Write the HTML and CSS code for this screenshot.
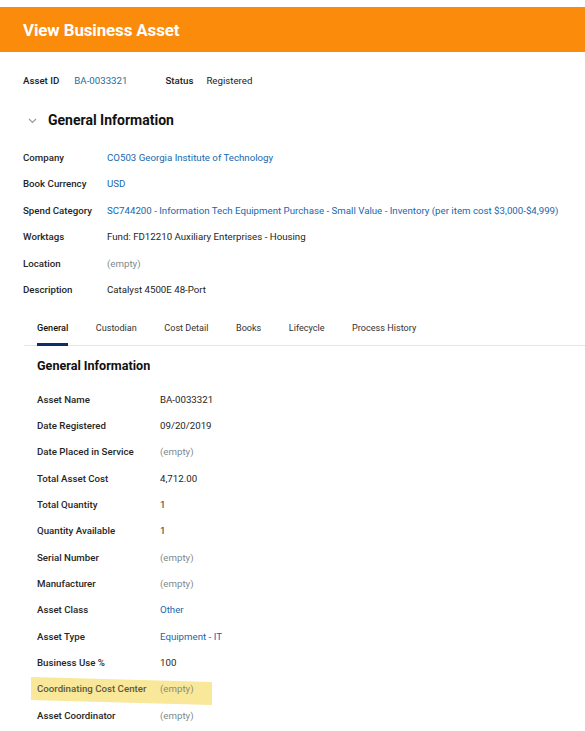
FILE: index.html
```html
<!DOCTYPE html>
<html>
<head>
<meta charset="utf-8">
<link rel="stylesheet" href="styles.css">
</head>
<body>
<div class="topbar"><h1 class="title">View Business Asset</h1></div>
<div class="meta">
  <span class="meta-label">Asset ID</span>
  <span class="meta-id link">BA-0033321</span>
  <span class="meta-label status-label">Status</span>
  <span class="meta-val">Registered</span>
</div>
<div class="section-head">
  <svg class="chev" width="9" height="6" viewBox="0 0 9 6"><path d="M1 1 L4.5 4.5 L8 1" fill="none" stroke="#8a9aa6" stroke-width="1.1"/></svg>
  <h2 class="section-title">General Information</h2>
</div>
<div class="fields top-fields">
  <div class="row"><span class="label">Company</span><span class="value link">CO503 Georgia Institute of Technology</span></div>
  <div class="row"><span class="label">Book Currency</span><span class="value link">USD</span></div>
  <div class="row"><span class="label">Spend Category</span><span class="value link">SC744200 - Information Tech Equipment Purchase - Small Value - Inventory (per item cost $3,000-$4,999)</span></div>
  <div class="row"><span class="label">Worktags</span><span class="value">Fund: FD12210 Auxiliary Enterprises - Housing</span></div>
  <div class="row"><span class="label">Location</span><span class="value empty">(empty)</span></div>
  <div class="row"><span class="label">Description</span><span class="value">Catalyst 4500E 48-Port</span></div>
</div>
<div class="tabs">
  <span class="tab active">General</span>
  <span class="tab">Custodian</span>
  <span class="tab">Cost Detail</span>
  <span class="tab">Books</span>
  <span class="tab">Lifecycle</span>
  <span class="tab">Process History</span>
</div>
<h3 class="sub-title">General Information</h3>
<div class="fields detail-fields">
  <div class="row"><span class="label">Asset Name</span><span class="value">BA-0033321</span></div>
  <div class="row"><span class="label">Date Registered</span><span class="value">09/20/2019</span></div>
  <div class="row"><span class="label">Date Placed in Service</span><span class="value empty">(empty)</span></div>
  <div class="row"><span class="label">Total Asset Cost</span><span class="value">4,712.00</span></div>
  <div class="row"><span class="label">Total Quantity</span><span class="value">1</span></div>
  <div class="row"><span class="label">Quantity Available</span><span class="value">1</span></div>
  <div class="row"><span class="label">Serial Number</span><span class="value empty">(empty)</span></div>
  <div class="row"><span class="label">Manufacturer</span><span class="value empty">(empty)</span></div>
  <div class="row"><span class="label">Asset Class</span><span class="value link">Other</span></div>
  <div class="row"><span class="label">Asset Type</span><span class="value link">Equipment - IT</span></div>
  <div class="row"><span class="label">Business Use %</span><span class="value">100</span></div>
  <div class="row highlighted"><span class="label">Coordinating Cost Center</span><span class="value empty">(empty)</span></div>
  <div class="row"><span class="label">Asset Coordinator</span><span class="value empty">(empty)</span></div>
</div>
</body>
</html>
```

FILE: styles.css
```css
* { box-sizing: border-box; }
html, body { margin: 0; padding: 0; background: #fff; }
body {
  font-family: Roboto, "Liberation Sans", Arial, sans-serif;
  font-size: 9.7px;
  color: #1e1e1e;
  width: 585px;
  overflow: hidden;
}
.topbar {
  margin-top: 7px;
  height: 45px;
  background: #fb8b0b;
  display: flex;
  align-items: center;
  padding-left: 23px;
}
.title {
  margin: 0;
  font-size: 16.9px;
  font-weight: 700;
  color: #fff;
  letter-spacing: -0.1px;
}
.meta {
  height: 56px;
  display: flex;
  align-items: center;
  padding-left: 23px;
}
.meta-label { color: #222; font-weight: 500; margin-right: 15px; }
.meta-id { margin-right: 38px; }
.status-label { margin-right: 13px; }
.meta-val { color: #222; }
.link { color: #1668b0; }
.meta-id.link { color: #236c9c; }
.section-head {
  height: 24px;
  display: flex;
  align-items: center;
  padding-left: 28px;
}
.chev { margin-right: 11px; margin-top: 1px; }
.section-title {
  margin: 0;
  font-size: 14px;
  font-weight: 700;
  color: #111;
}
.fields { display: flex; flex-direction: column; }
.top-fields { margin-top: 12.3px; padding-left: 23px; }
.row {
  height: 26.4px;
  display: flex;
  align-items: center;
  position: relative;
}
.label {
  font-weight: 500;
  color: #262626;
  flex: none;
}
.top-fields .label { width: 84px; }
.value { white-space: nowrap; }
.empty { color: #7d8b90; }
.tabs {
  margin-top: 7.5px;
  margin-left: 24px;
  padding-left: 13px;
  display: flex;
  gap: 27.5px;
  border-bottom: 1px solid #e4e6e8;
}
.tab {
  height: 36px;
  line-height: 36px;
  color: #333;
  font-size: 9.1px;
  border-bottom: 3px solid transparent;
  margin-bottom: -1px;
}
.tab.active {
  color: #111;
  font-weight: 500;
  border-bottom-color: #0b2f66;
}
.sub-title {
  margin: 8px 0 0 37px;
  height: 24px;
  line-height: 24px;
  font-size: 12.6px;
  font-weight: 700;
  color: #111;
}
.detail-fields { margin-top: 8px; padding-left: 37px; }
.detail-fields .row { height: 26.33px; }
.detail-fields .label { width: 123px; }
.highlighted { z-index: 0; }
.highlighted::before {
  content: "";
  position: absolute;
  left: -6px;
  top: 1.5px;
  width: 181px;
  height: 23px;
  background: #f9e79a;
  transform: skewY(1.6deg);
  transform-origin: left top;
  z-index: -1;
}
.highlighted .label { color: #5e5a3c; }
.highlighted .value { color: #8e8c72; }
```
